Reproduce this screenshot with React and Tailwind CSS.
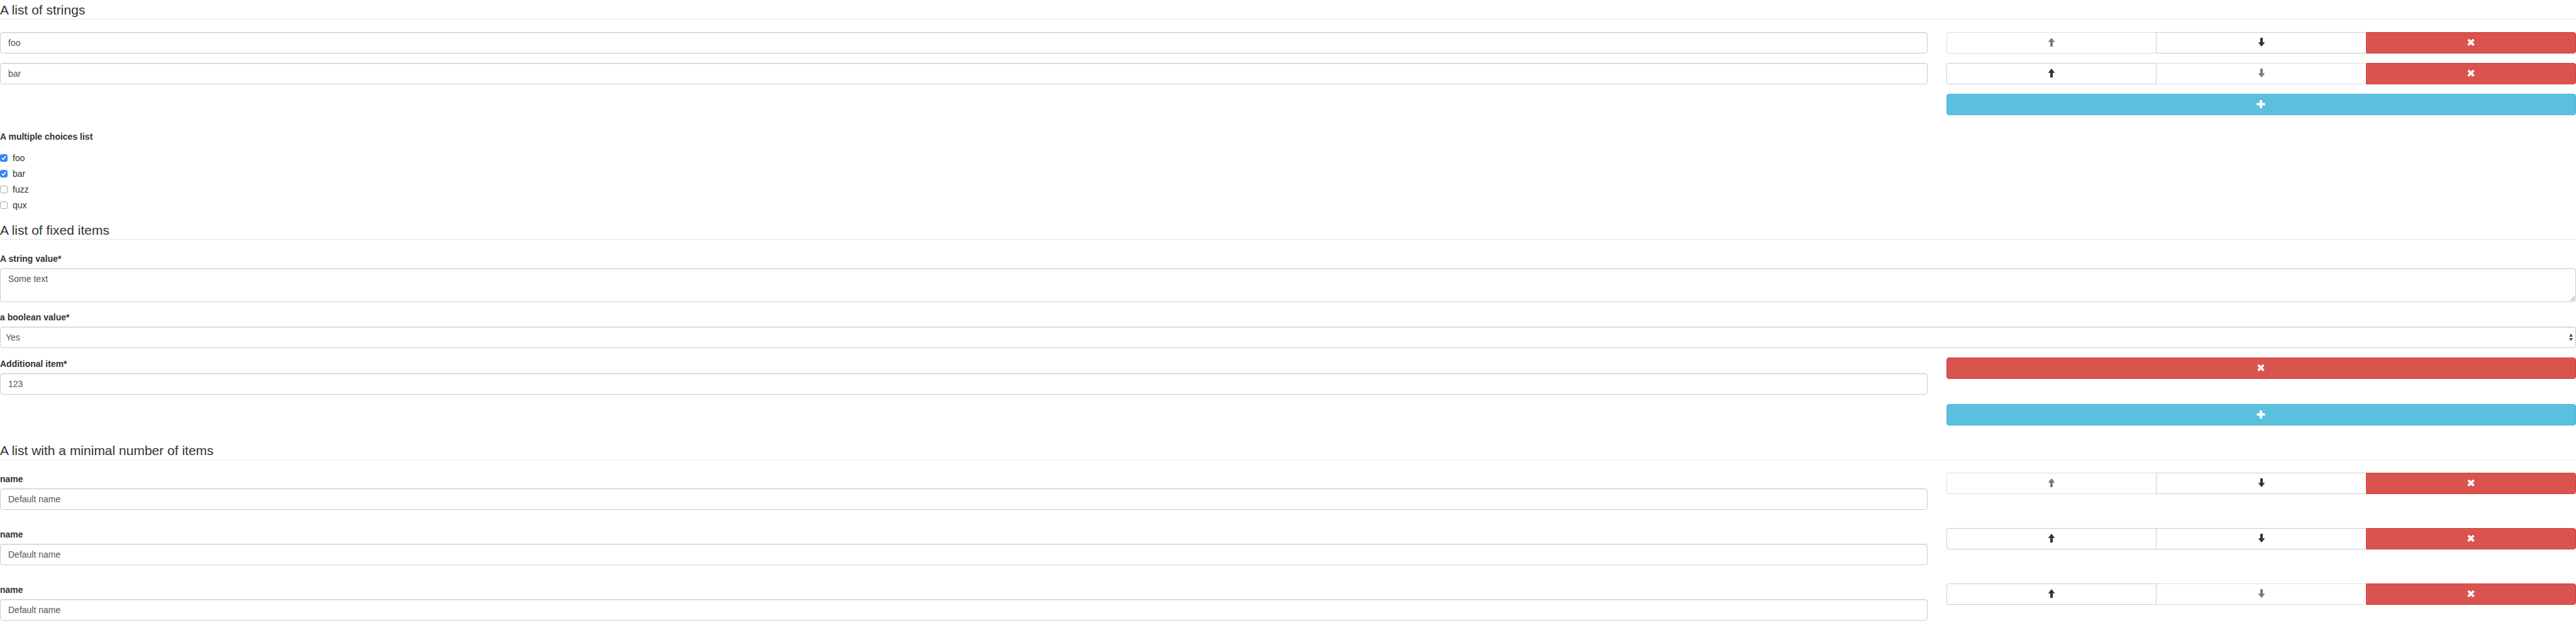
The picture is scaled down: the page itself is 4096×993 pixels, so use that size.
import { useState } from "react";

const labelClass = "mb-[5px] block text-[14px] leading-5 font-bold";
const fieldClass =
  "block w-full rounded-[4px] border border-[#ccc] bg-white text-[14px] leading-5 text-[#555] shadow-[inset_0_1px_1px_rgba(0,0,0,0.075)] outline-none focus:border-[#66afe9]";

const icons = {
  up: "M7 0 L12.4 6.8 H9 V13.6 q0 .4 -.4 .4 H5.4 q-.4 0 -.4 -.4 V6.8 H1.6 Z",
  down: "M7 14 L12.4 7.2 H9 V0.4 q0 -.4 -.4 -.4 H5.4 q-.4 0 -.4 .4 V7.2 H1.6 Z",
  plus: "M5.5 1 h3 q.5 0 .5 .5 V5.5 h4 q.5 0 .5 .5 v3 q0 .5 -.5 .5 H9 v4 q0 .5 -.5 .5 H5.5 q-.5 0 -.5 -.5 V9.5 H1 q-.5 0 -.5 -.5 V6 q0 -.5 .5 -.5 H5 V1.5 q0 -.5 .5 -.5 Z",
  remove:
    "M3.9 2.1 L7 5.2 L10.1 2.1 L12.2 4.2 L9.1 7.3 L12.2 10.4 L10.1 12.5 L7 9.4 L3.9 12.5 L1.8 10.4 L4.9 7.3 L1.8 4.2 Z",
};

function Icon({ name }) {
  return (
    <svg viewBox="0 0 14 16" className="h-4 w-3.5 fill-current" aria-hidden="true">
      <path
        d={icons[name]}
        stroke={name === "remove" ? "currentColor" : "none"}
        strokeWidth="1"
        strokeLinejoin="round"
      />
    </svg>
  );
}

const buttonBase = "flex h-[34px] items-center justify-center border";
const plainButton =
  "border-[#ccc] bg-white text-[#333] disabled:border-[#dedede] disabled:text-[#7b7b7b]";

function ItemButtons({ first, last }) {
  return (
    <div className="grid grid-cols-3">
      <button type="button" disabled={first} aria-label="Move up" className={`${buttonBase} ${plainButton} rounded-l-[4px] border-r-0`}>
        <Icon name="up" />
      </button>
      <button type="button" disabled={last} aria-label="Move down" className={`${buttonBase} ${plainButton} border-r-0 border-l-[#ccc]!`}>
        <Icon name="down" />
      </button>
      <button type="button" aria-label="Remove" className={`${buttonBase} rounded-r-[4px] border-[#d43f3a] bg-[#d9534f] text-white`}>
        <Icon name="remove" />
      </button>
    </div>
  );
}

function WideButton({ kind }) {
  return kind === "add" ? (
    <button type="button" aria-label="Add" className={`${buttonBase} w-full rounded-[4px] border-[#46b8da] bg-[#5bc0de] text-white`}>
      <Icon name="plus" />
    </button>
  ) : (
    <button type="button" aria-label="Remove" className={`${buttonBase} w-full rounded-[4px] border-[#d43f3a] bg-[#d9534f] text-white`}>
      <Icon name="remove" />
    </button>
  );
}

function Row({ children, actions }) {
  return (
    <div className="grid grid-cols-4 gap-x-[30px]">
      <div className="col-span-3">{children}</div>
      <div>{actions}</div>
    </div>
  );
}

function Legend({ children }) {
  return (
    <h2 className="mb-5 h-[31px] border-b border-[#e5e5e5] text-[21px] leading-8">
      {children}
    </h2>
  );
}

function Choice({ label, checked }) {
  const [on, setOn] = useState(checked);
  return (
    <label className="flex h-5 items-center gap-2 text-[14px] leading-5">
      <span className="grid size-3">
        <input
          type="checkbox"
          checked={on}
          onChange={() => setOn(!on)}
          className="col-start-1 row-start-1 size-3 appearance-none rounded-[3px] border border-[#a9a9a9] bg-white checked:border-[#2f7cf6] checked:bg-[#3b86f8]"
        />
        {on && (
          <svg viewBox="0 0 12 12" className="pointer-events-none col-start-1 row-start-1 size-3" aria-hidden="true">
            <path d="M3.2 6.4 L5.2 8.5 L8.8 3.4" fill="none" stroke="#fff" strokeWidth="1.5" strokeLinecap="round" strokeLinejoin="round" />
          </svg>
        )}
      </span>
      {label}
    </label>
  );
}

export default function App() {
  const strings = ["foo", "bar"];
  const choices = [["foo", true], ["bar", true], ["fuzz", false], ["qux", false]];
  const names = ["name-0", "name-1", "name-2"];

  return (
    <form className="bg-white font-['Liberation_Sans',Arial,sans-serif] text-[#333]">
      <section>
        <Legend>A list of strings</Legend>
        <div className="flex flex-col gap-[15px]">
          {strings.map((value, i) => (
            <Row key={value} actions={<ItemButtons first={i === 0} last={i === strings.length - 1} />}>
              <input type="text" aria-label={`String ${i + 1}`} defaultValue={value} className={`${fieldClass} h-[34px] px-3`} />
            </Row>
          ))}
          <Row actions={<WideButton kind="add" />} />
        </div>
      </section>

      <fieldset className="mt-6">
        <legend className="mb-3.5 block text-[14px] leading-5 font-bold">A multiple choices list</legend>
        <div className="flex flex-col gap-[5px]">
          {choices.map(([label, checked]) => (
            <Choice key={label} label={label} checked={checked} />
          ))}
        </div>
      </fieldset>

      <section className="mt-3.5">
        <Legend>A list of fixed items</Legend>
        <label htmlFor="string-value" className={labelClass}>A string value*</label>
        <textarea id="string-value" rows={2} defaultValue="Some text" className={`${fieldClass} h-[54px] resize-y px-3 py-1.5`} />

        <label htmlFor="boolean-value" className={`${labelClass} mt-3.5`}>a boolean value*</label>
        <div className="grid">
          <select id="boolean-value" defaultValue="Yes" className={`${fieldClass} col-start-1 row-start-1 h-[34px] appearance-none px-2`}>
            <option>Yes</option>
            <option>No</option>
          </select>
          <svg viewBox="0 0 6 12" className="pointer-events-none col-start-1 row-start-1 mr-[5px] h-3 w-1.5 self-center justify-self-end fill-[#4d4d4d]" aria-hidden="true">
            <path d="M3 0 L6 5 H0 Z M3 12 L6 7 H0 Z" />
          </svg>
        </div>

        <div className="mt-[15px] flex flex-col gap-[15px]">
          <Row actions={<WideButton kind="remove" />}>
            <label htmlFor="additional-item" className={labelClass}>Additional item*</label>
            <input id="additional-item" type="text" defaultValue="123" className={`${fieldClass} h-[34px] px-3`} />
          </Row>
          <Row actions={<WideButton kind="add" />} />
        </div>
      </section>

      <section className="mt-6">
        <Legend>A list with a minimal number of items</Legend>
        <div className="flex flex-col gap-[29px]">
          {names.map((id, i) => (
            <Row key={id} actions={<ItemButtons first={i === 0} last={i === names.length - 1} />}>
              <label htmlFor={id} className={labelClass}>name</label>
              <input id={id} type="text" defaultValue="Default name" className={`${fieldClass} h-[34px] px-3`} />
            </Row>
          ))}
        </div>
      </section>
    </form>
  );
}
